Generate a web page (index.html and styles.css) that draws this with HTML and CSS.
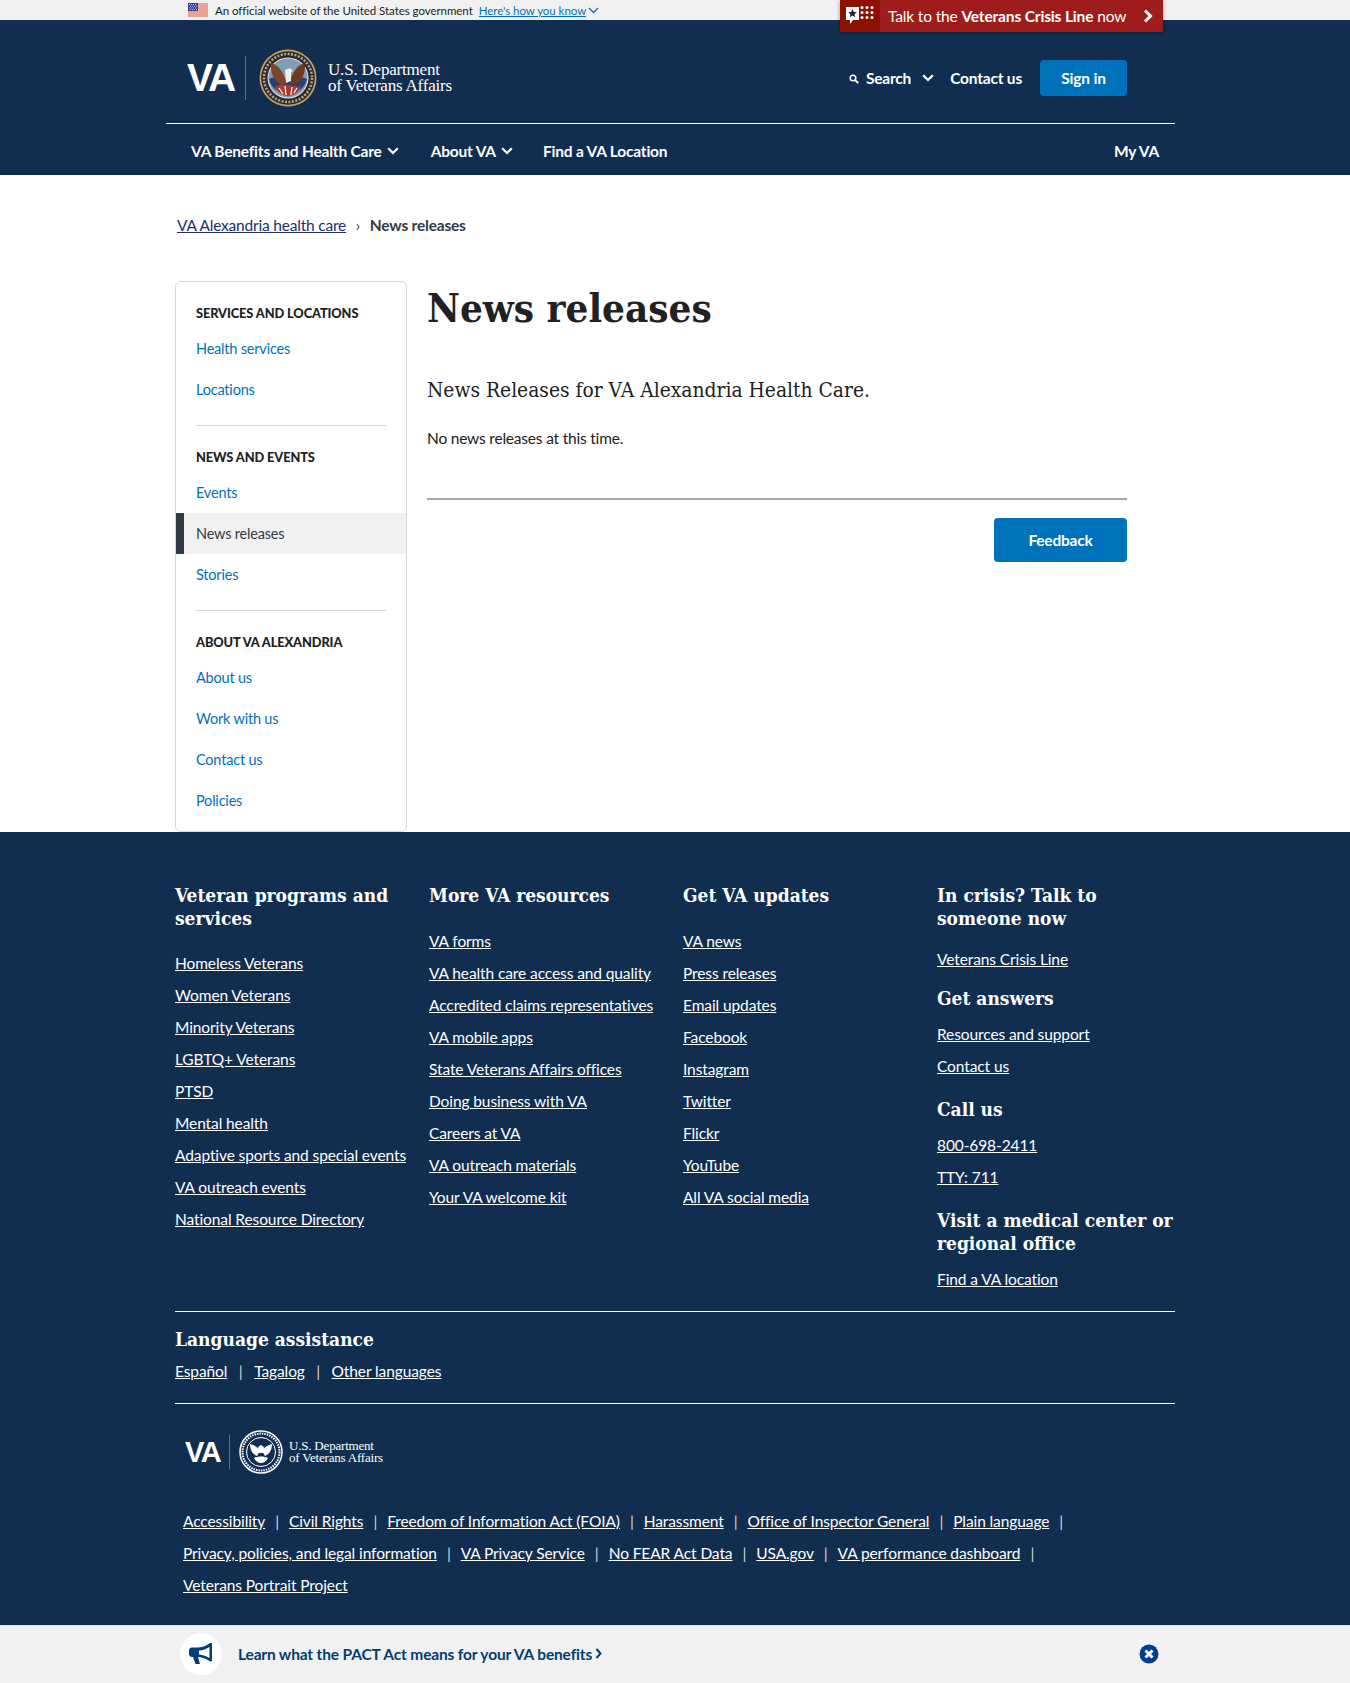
FILE: index.html
```html
<!DOCTYPE html>
<html lang="en">

<head>
    <meta charset="utf-8">
    <title>News releases | VA Alexandria health care</title>
    <link rel="stylesheet" href="styles.css">
</head>

<body>
    <div class="banner">
        <div class="wrap banner-in">
            <svg class="flag" width="20" height="14" viewBox="0 0 20 14">
                <rect width="20" height="14" fill="#fff"/>
                <path d="M0 1h20M0 3h20M0 5h20M0 7h20M0 9h20M0 11h20M0 13h20" stroke="#d5472f" stroke-width="1"/>
                <rect width="10" height="8" fill="#3b3b8f"/>
                <path d="M1 1.5h8M2 3.2h7M1 5h8M2 6.6h7" stroke="#fff" stroke-width=".7" stroke-dasharray="1 1"/>
            </svg>
            <span class="official">An official website of the United States government</span>
            <a href="#" class="how">Here's how you know</a>
            <svg width="11" height="7" viewBox="0 0 11 7"><path d="M1 1l4.5 4.5L10 1" fill="none" stroke="#0071bb" stroke-width="1.3"/></svg>
            <a href="#" class="crisis">
                <span class="crisis-icon">
                    <svg width="30" height="24" viewBox="0 0 30 24">
                        <path d="M1 3h13v13H8l-3 4v-4H1z" fill="#fff"/>
                        <path d="M7.500 5l1.300 2.900 3 .3-2.300 2 .7 3-2.700-1.600-2.700 1.600.7-3-2.300-2 3-.3z" fill="#2b1a1a"/>
                        <g fill="#fff">
                            <circle cx="17" cy="3.500" r="1.500"/><circle cx="22" cy="3.500" r="1.500"/><circle cx="27" cy="3.500" r="1.500"/>
                            <circle cx="17" cy="8.500" r="1.500"/><circle cx="22" cy="8.500" r="1.500"/><circle cx="27" cy="8.500" r="1.500"/>
                            <circle cx="17" cy="13.500" r="1.500"/><circle cx="22" cy="13.500" r="1.500"/><circle cx="27" cy="13.500" r="1.500"/>
                        </g>
                    </svg>
                </span>
                <span class="crisis-text">Talk to the <b>Veterans Crisis Line</b> now</span>
                <svg class="crisis-arrow" width="10" height="14" viewBox="0 0 10 14"><path d="M2 1.500L7.500 7 2 12.500" fill="none" stroke="#fff" stroke-width="3"/></svg>
            </a>
        </div>
    </div>

    <header class="site-header">
        <div class="wrap">
            <div class="masthead">
                <a href="#" class="logo">
                    <span class="logo-va">VA</span>
                    <span class="logo-bar"></span>
                    <svg class="seal" width="58" height="58" viewBox="0 0 58 58">
                        <circle cx="29" cy="29" r="28.500" fill="#c9a15a"/>
                        <circle cx="29" cy="29" r="26.800" fill="#2b2a33"/>
                        <circle cx="29" cy="29" r="24" fill="none" stroke="#b9a98c" stroke-width="2.500" stroke-dasharray="2 1.500"/>
                        <circle cx="29" cy="29" r="20.500" fill="#e9e3d4"/>
                        <circle cx="29" cy="29" r="19.500" fill="#7f9db8"/>
                        <path d="M10 30a19.500 19.500 0 0 0 38 0l-8-3-11 4-11-4z" fill="#27406f"/>
                        <path d="M27 33C25 24 20 16 12 14c-1 9 3 19 11 22z" fill="#7d4526"/>
                        <path d="M31 33c2-9 7-17 15-19 1 9-3 19-11 22z" fill="#6d3c20"/>
                        <path d="M26 21l5-2 3 3-2 1 0 9-5 2z" fill="#f4efe6"/>
                        <path d="M16 38c4-2 8-3 13-2s9 1 13 2c-3 6-8 9-13 9s-10-3-13-9z" fill="#a83a34"/>
                        <path d="M20 39l4 6M26 37l1 9M33 38l-1 8M38 39l-3 5" stroke="#f4efe6" stroke-width="1.300"/>
                    </svg>
                    <span class="logo-name">U.S. Department<br>of Veterans Affairs</span>
                </a>
                <div class="tools">
                    <a href="#" class="tool search">
                        <svg width="10" height="10" viewBox="0 0 10 10"><circle cx="4" cy="4" r="2.800" fill="none" stroke="#fff" stroke-width="1.500"/><path d="M6 6l3.200 3.200" stroke="#fff" stroke-width="1.800"/></svg>
                        Search
                    </a>
                    <svg class="chev search-chev" width="12" height="8" viewBox="0 0 12 8"><path d="M1.200 1.200L6 6l4.800-4.800" fill="none" stroke="#fff" stroke-width="2.200"/></svg>
                    <a href="#" class="tool contact">Contact us</a>
                    <a href="#" class="signin">Sign in</a>
                </div>
            </div>
            <nav class="mainnav">
                <a href="#" class="nav-benefits">VA Benefits and Health Care</a>
                <svg class="chev" width="12" height="8" viewBox="0 0 12 8"><path d="M1.200 1.200L6 6l4.800-4.800" fill="none" stroke="#fff" stroke-width="2.200"/></svg>
                <a href="#" class="nav-about">About VA</a>
                <svg class="chev" width="12" height="8" viewBox="0 0 12 8"><path d="M1.200 1.200L6 6l4.800-4.800" fill="none" stroke="#fff" stroke-width="2.200"/></svg>
                <a href="#" class="nav-find">Find a VA Location</a>
                <a href="#" class="nav-my">My VA</a>
            </nav>
        </div>
    </header>

    <div class="wrap">
        <div class="crumbs">
            <a href="#">VA Alexandria health care</a>
            <span class="crumb-sep">›</span>
            <b>News releases</b>
        </div>

        <div class="page">
            <aside class="sidenav">
                <div class="side-group">
                    <h4>Services and locations</h4>
                    <a href="#">Health services</a>
                    <a href="#">Locations</a>
                </div>
                <div class="side-group">
                    <h4>News and events</h4>
                    <a href="#">Events</a>
                    <a href="#" class="active">News releases</a>
                    <a href="#">Stories</a>
                </div>
                <div class="side-group">
                    <h4>About VA Alexandria</h4>
                    <a href="#">About us</a>
                    <a href="#">Work with us</a>
                    <a href="#">Contact us</a>
                    <a href="#">Policies</a>
                </div>
            </aside>
            <main class="content">
                <h1>News releases</h1>
                <p class="intro">News Releases for VA Alexandria Health Care.</p>
                <p class="none">No news releases at this time.</p>
                <hr class="rule">
                <div class="feedback-row"><a href="#" class="feedback">Feedback</a></div>
            </main>
        </div>
    </div>

    <footer class="site-footer">
        <div class="wrap">
            <div class="foot-cols">
                <div class="foot-col">
                    <h3>Veteran programs and services</h3>
                    <ul>
                        <li><a href="#">Homeless Veterans</a></li>
                        <li><a href="#">Women Veterans</a></li>
                        <li><a href="#">Minority Veterans</a></li>
                        <li><a href="#">LGBTQ+ Veterans</a></li>
                        <li><a href="#">PTSD</a></li>
                        <li><a href="#">Mental health</a></li>
                        <li><a href="#">Adaptive sports and special events</a></li>
                        <li><a href="#">VA outreach events</a></li>
                        <li><a href="#">National Resource Directory</a></li>
                    </ul>
                </div>
                <div class="foot-col">
                    <h3>More VA resources</h3>
                    <ul>
                        <li><a href="#">VA forms</a></li>
                        <li><a href="#">VA health care access and quality</a></li>
                        <li><a href="#">Accredited claims representatives</a></li>
                        <li><a href="#">VA mobile apps</a></li>
                        <li><a href="#">State Veterans Affairs offices</a></li>
                        <li><a href="#">Doing business with VA</a></li>
                        <li><a href="#">Careers at VA</a></li>
                        <li><a href="#">VA outreach materials</a></li>
                        <li><a href="#">Your VA welcome kit</a></li>
                    </ul>
                </div>
                <div class="foot-col">
                    <h3>Get VA updates</h3>
                    <ul>
                        <li><a href="#">VA news</a></li>
                        <li><a href="#">Press releases</a></li>
                        <li><a href="#">Email updates</a></li>
                        <li><a href="#">Facebook</a></li>
                        <li><a href="#">Instagram</a></li>
                        <li><a href="#">Twitter</a></li>
                        <li><a href="#">Flickr</a></li>
                        <li><a href="#">YouTube</a></li>
                        <li><a href="#">All VA social media</a></li>
                    </ul>
                </div>
                <div class="foot-col last">
                    <h3>In crisis? Talk to someone now</h3>
                    <ul>
                        <li><a href="#">Veterans Crisis Line</a></li>
                    </ul>
                    <h3>Get answers</h3>
                    <ul>
                        <li><a href="#">Resources and support</a></li>
                        <li><a href="#">Contact us</a></li>
                    </ul>
                    <h3>Call us</h3>
                    <ul>
                        <li><a href="#">800-698-2411</a></li>
                        <li><a href="#">TTY: 711</a></li>
                    </ul>
                    <h3>Visit a medical center or regional office</h3>
                    <ul>
                        <li><a href="#">Find a VA location</a></li>
                    </ul>
                </div>
            </div>

            <div class="lang">
                <h3>Language assistance</h3>
                <ul class="pipes">
                    <li><a href="#">Español</a></li>
                    <li><a href="#">Tagalog</a></li>
                    <li><a href="#">Other languages</a></li>
                </ul>
            </div>

            <a href="#" class="logo foot-logo">
                <span class="logo-va">VA</span>
                <span class="logo-bar"></span>
                <svg class="seal" width="44" height="44" viewBox="0 0 44 44">
                    <circle cx="22" cy="22" r="21" fill="none" stroke="#fff" stroke-width="1.500"/>
                    <circle cx="22" cy="22" r="18.500" fill="none" stroke="#fff" stroke-width="2" stroke-dasharray="1.500 1"/>
                    <circle cx="22" cy="22" r="14.500" fill="none" stroke="#fff" stroke-width="1"/>
                    <path d="M21 21c-2-4-6-6-10-7 0 5 2 10 7 12zM23 21c2-4 6-6 10-7 0 5-2 10-7 12z" fill="#fff"/>
                    <path d="M19 17l3-2 3 2-1 6-4 0zM15 28c4-2 10-2 14 0-2 4-5 5-7 5s-5-1-7-5z" fill="#fff"/>
                </svg>
                <span class="logo-name">U.S. Department<br>of Veterans Affairs</span>
            </a>

            <ul class="pipes legal">
                <li><a href="#">Accessibility</a></li>
                <li><a href="#">Civil Rights</a></li>
                <li><a href="#">Freedom of Information Act (FOIA)</a></li>
                <li><a href="#">Harassment</a></li>
                <li><a href="#">Office of Inspector General</a></li>
                <li><a href="#">Plain language</a></li>
                <li><a href="#">Privacy, policies, and legal information</a></li>
                <li><a href="#">VA Privacy Service</a></li>
                <li><a href="#">No FEAR Act Data</a></li>
                <li><a href="#">USA.gov</a></li>
                <li><a href="#">VA performance dashboard</a></li>
                <li class="end"><a href="#">Veterans Portrait Project</a></li>
            </ul>
        </div>
    </footer>

    <div class="promo">
        <div class="wrap promo-in">
            <span class="promo-icon">
                <svg width="26" height="24" viewBox="0 0 26 24">
                    <path d="M24 1v18l-2 .5C18 16.500 14 15 9 15H4c-2 0-3-1.500-3-3.500V9c0-2 1-3.500 3-3.500h5c5 0 9-1.500 13-4.500z M21.500 5C18.500 7 15 8.300 11 8.600v4c4 .3 7.500 1.600 10.500 3.600z" fill="#003e73" fill-rule="evenodd"/>
                    <path d="M5 15h5l2 7H7.500z" fill="#003e73"/>
                </svg>
            </span>
            <a href="#" class="promo-text">Learn what the PACT Act means for your VA benefits</a>
            <svg class="promo-arrow" width="8" height="11" viewBox="0 0 8 11"><path d="M1.500 1l4 4.500-4 4.500" fill="none" stroke="#003e73" stroke-width="2"/></svg>
            <svg class="promo-close" width="20" height="20" viewBox="0 0 20 20">
                <circle cx="10" cy="10" r="9.500" fill="#003e8f"/>
                <path d="M6.500 6.500l7 7M13.500 6.500l-7 7" stroke="#fff" stroke-width="3"/>
            </svg>
        </div>
    </div>
</body>

</html>
```

FILE: styles.css
```css
* {
    box-sizing: border-box;
}
body {
    margin: 0;
    font-family: 'Lato', sans-serif;
    font-size: 15.500px;
    letter-spacing: -0.2px;
    color: #212121;
    background: #fff;
}
a {
    color: inherit;
}
ul {
    list-style: none;
    margin: 0;
    padding: 0;
}
.wrap {
    width: 1000px;
    margin: 0 auto;
}

/* top strip */
.banner {
    height: 20px;
    background: #f1f1f1;
    font-size: 11.500px;
    letter-spacing: -0.05px;
}
.banner-in {
    position: relative;
    display: flex;
    align-items: center;
    height: 20px;
    padding-left: 13px;
}
.flag {
    margin-right: 7px;
}
.official {
    margin-right: 6px;
    color: #212121;
}
.how {
    color: #0071bb;
    margin-right: 2px;
}
.crisis {
    position: absolute;
    top: 0;
    right: 12px;
    z-index: 2;
    display: flex;
    align-items: center;
    width: 323px;
    height: 32px;
    background: #9f1c1c;
    color: #fff;
    text-decoration: none;
    font-size: 15.500px;
    letter-spacing: -0.15px;
    box-shadow: 0 1px 4px rgba(0, 0, 0, 0.4);
}
.crisis-icon {
    display: flex;
    align-items: center;
    justify-content: center;
    width: 40px;
    height: 32px;
    background: #8e1000;
}
.crisis-text {
    margin-left: 8px;
}
.crisis-arrow {
    margin-left: auto;
    margin-right: 10px;
}

/* header */
.site-header {
    background: #112e51;
    color: #fff;
    height: 155px;
    border-bottom: 2px solid #0e2a49;
}
.masthead {
    display: flex;
    align-items: center;
    justify-content: space-between;
    height: 103px;
    padding: 12px 48px 0 12px;
}
.logo {
    display: flex;
    align-items: center;
    color: #fff;
    text-decoration: none;
}
.logo-va {
    font-family: 'Liberation Sans', sans-serif;
    font-weight: 700;
    font-size: 39px;
    letter-spacing: -2px;
    line-height: 44px;
    width: 58px;
}
.logo-bar {
    width: 1px;
    height: 44px;
    background: #5a7190;
    margin-right: 13px;
}
.logo-name {
    font-family: 'Liberation Serif', serif;
    font-size: 17px;
    line-height: 16px;
    margin-left: 11px;
    letter-spacing: -0.2px;
}
.tools {
    display: flex;
    align-items: center;
    font-weight: 700;
}
.tool {
    color: #fff;
    text-decoration: none;
}
.search svg {
    margin-right: 3px;
}
.search-chev {
    margin: 0 16px 0 11px;
}
.signin {
    width: 87px;
    height: 36px;
    line-height: 36px;
    margin-left: 18px;
    text-align: center;
    background: #0071bb;
    border-radius: 4px;
    color: #fff;
    text-decoration: none;
}
.mainnav {
    display: flex;
    align-items: center;
    height: 50px;
    margin-left: -9px;
    width: 1009px;
    padding: 4px 16px 0 25px;
    border-top: 1px solid #fff;
    font-weight: 700;
}
.mainnav a {
    color: #fff;
    text-decoration: none;
}
.chev {
    flex: none;
}
.mainnav .chev {
    margin-left: 5px;
}
.nav-about {
    margin-left: 32px;
}
.nav-find {
    margin-left: 30px;
}
.nav-my {
    margin-left: auto;
}

/* breadcrumb */
.crumbs {
    padding: 38px 0 0 2px;
    line-height: 24px;
    color: #323a45;
}
.crumbs a {
    color: #212e6a;
}
.crumb-sep {
    margin: 0 6px;
}

/* page */
.page {
    display: flex;
    gap: 20px;
    margin-top: 44px;
}
.sidenav {
    flex: none;
    width: 232px;
    height: 551px;
    border: 1px solid #d6d7d9;
    border-radius: 6px;
    padding-top: 21px;
}
.side-group {
    margin-bottom: 21px;
    padding-bottom: 16px;
    position: relative;
}
.side-group:not(:last-child)::after {
    content: "";
    position: absolute;
    left: 20px;
    right: 20px;
    bottom: 0;
    height: 1px;
    background: #d6d7d9;
}
.side-group h4 {
    margin: 0 0 5px;
    padding-left: 20px;
    font-size: 12.800px;
    letter-spacing: -0.1px;
    line-height: 20px;
    font-weight: 900;
    text-transform: uppercase;
}
.side-group a {
    display: block;
    height: 41px;
    line-height: 41px;
    padding-left: 20px;
    font-size: 14.500px;
    color: #0071bb;
    text-decoration: none;
}
.side-group a.active {
    background: #f1f1f1;
    border-left: 8px solid #323a45;
    padding-left: 12px;
    color: #323a45;
}
.content {
    flex: 1;
    padding-right: 48px;
}
h1 {
    margin: 0;
    font-family: 'DejaVu Serif Condensed', 'DejaVu Serif', serif;
    font-size: 40px;
    letter-spacing: 0;
    line-height: 54px;
    font-weight: 700;
}
.intro {
    margin: 41px 0 0;
    font-family: 'DejaVu Serif Condensed', 'DejaVu Serif', serif;
    font-size: 20.800px;
    letter-spacing: 0;
    line-height: 28px;
}
.none {
    margin: 22px 0 0;
    line-height: 24px;
}
.rule {
    margin: 48px 0 0;
    border: 0;
    height: 2px;
    background: #a5a7ab;
}
.feedback-row {
    display: flex;
    justify-content: flex-end;
    margin-top: 18px;
}
.feedback {
    width: 133px;
    height: 44px;
    line-height: 44px;
    text-align: center;
    background: #0071bb;
    border-radius: 4px;
    color: #fff;
    font-weight: 700;
    text-decoration: none;
}

/* footer */
.site-footer {
    background: #112e51;
    color: #fff;
    padding: 52px 0 82px;
    letter-spacing: -0.1px;
}
.site-footer a {
    color: #fff;
}
.site-footer h3 {
    margin: 0;
    font-family: 'DejaVu Serif Condensed', 'DejaVu Serif', serif;
    font-size: 19px;
    letter-spacing: 0;
    line-height: 23px;
    font-weight: 700;
}
.foot-cols {
    display: grid;
    grid-template-columns: repeat(4, 254px);
    padding-bottom: 16px;
    border-bottom: 1px solid #fff;
}
.foot-col ul {
    margin-top: 18px;
}
.foot-col:first-child ul {
    margin-top: 17px;
}
.foot-col li {
    height: 32px;
    line-height: 32px;
    white-space: nowrap;
}
.foot-col.last {
    margin-right: -8px;
}
.foot-col.last h3 {
    margin-top: 16px;
    max-width: 242px;
}
.foot-col.last ul {
    margin-top: 8px;
}
.foot-col.last ul:first-of-type {
    margin-top: 13px;
}
.foot-col.last h3:first-child {
    margin-top: 0;
}
.foot-col.last ul:first-of-type + h3 {
    margin-top: 12px;
}
.lang {
    padding: 16px 0;
    border-bottom: 1px solid #fff;
}
.pipes {
    display: flex;
    flex-wrap: wrap;
    margin-top: 4px;
}
.pipes li {
    height: 32px;
    line-height: 32px;
    white-space: nowrap;
}
.pipes li::after {
    content: "|";
    margin: 0 10px;
    color: #d6d7d9;
}
.lang .pipes li::after {
    margin: 0 11.500px;
}
.pipes li:last-child::after {
    content: none;
}
.foot-logo {
    margin: 26px 0 0 10px;
    width: 220px;
}
.foot-logo .logo-va {
    font-size: 29px;
    width: 44px;
    letter-spacing: -1.500px;
}
.foot-logo .logo-bar {
    height: 34px;
    margin-right: 9px;
}
.foot-logo .logo-name {
    font-size: 13px;
    line-height: 12px;
    margin-left: 6px;
}
.legal {
    margin: 31px 0 0 8px;
    width: 900px;
}

/* sticky promo */
.promo {
    position: fixed;
    left: 0;
    right: 0;
    bottom: 0;
    height: 58px;
    background: #f1f1f1;
    border-top: 1px solid #dfe3e8;
    letter-spacing: -0.15px;
}
.promo-in {
    display: flex;
    align-items: center;
    height: 55px;
    padding-left: 5px;
    color: #003e73;
}
.promo-icon {
    display: flex;
    align-items: center;
    justify-content: center;
    width: 42px;
    height: 42px;
    margin-right: 16px;
    background: #fff;
    border-radius: 50%;
}
.promo-text {
    color: #003e73;
    font-weight: 700;
    text-decoration: none;
}
.promo-arrow {
    margin-left: 3px;
}
.promo-close {
    margin-left: auto;
    margin-right: 16px;
}
```
